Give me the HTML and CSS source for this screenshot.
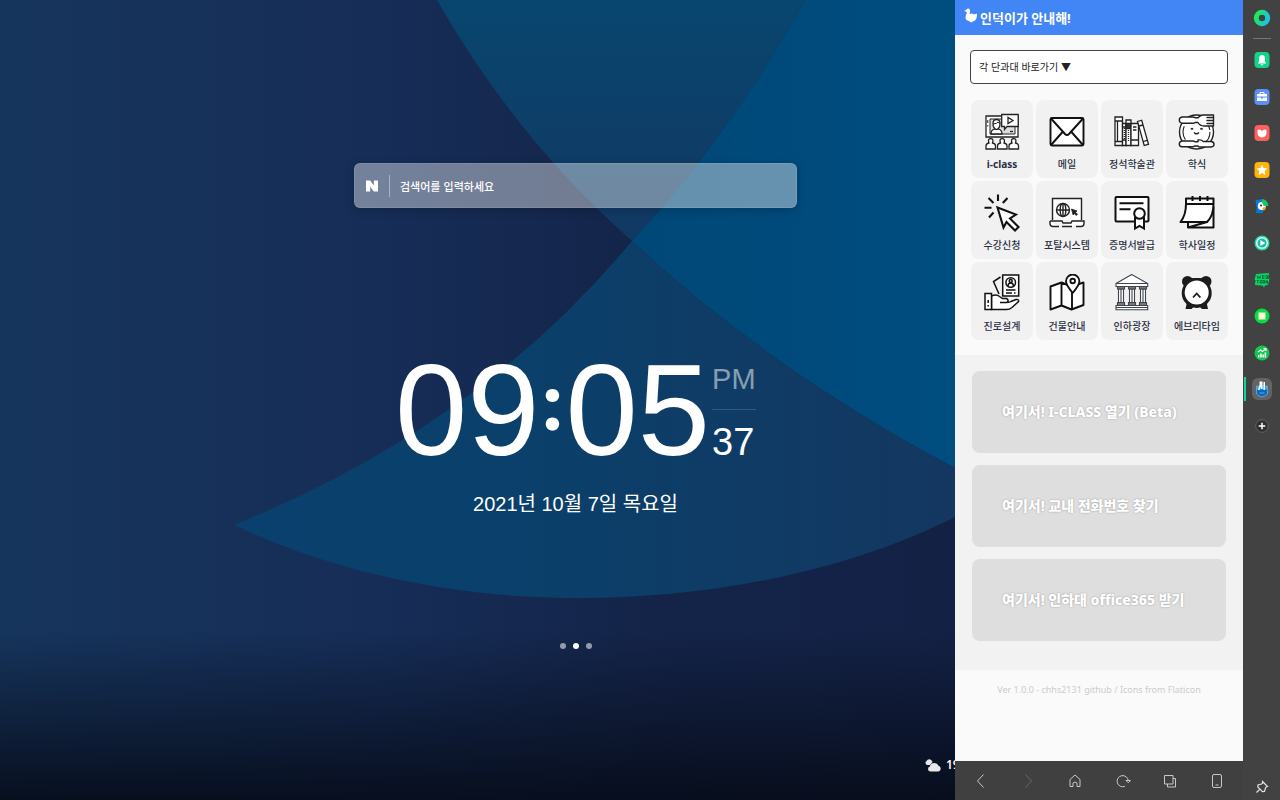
FILE: index.html
```html
<!DOCTYPE html>
<html lang="ko">
<head>
<meta charset="utf-8">
<title>인덕이가 안내해!</title>
<link rel="stylesheet" href="styles.css">
</head>
<body>
<main class="home">
  <svg class="wallpaper" viewBox="0 0 955 800" preserveAspectRatio="none" aria-hidden="true">
    <defs>
      <linearGradient id="base" x1="0" x2="1" y1="0" y2="0"><stop offset="0" stop-color="#16355d"/><stop offset=".4" stop-color="#162d57"/><stop offset=".68" stop-color="#142449"/><stop offset="1" stop-color="#132145"/></linearGradient>
      <linearGradient id="top" x1="0" x2="0" y1="0" y2="1"><stop offset="0" stop-color="#08466f"/><stop offset="1" stop-color="#123863"/></linearGradient>
      <linearGradient id="low" x1="0" x2="1" y1="0" y2="0"><stop offset="0" stop-color="#09406d"/><stop offset=".4" stop-color="#0a406b"/><stop offset="1" stop-color="#143760"/></linearGradient>
      <linearGradient id="right" x1="0" x2="1" y1="0" y2="0"><stop offset="0" stop-color="#004877"/><stop offset="1" stop-color="#004d80"/></linearGradient>
      <linearGradient id="fade" x1="0" x2="0" y1="0" y2="1"><stop offset="0" stop-color="#060b18" stop-opacity="0"/><stop offset="1" stop-color="#060b18" stop-opacity=".9"/></linearGradient>
    </defs>
    <path fill="url(#base)" d="M0 0H955V800H0z"/>
    <path fill="url(#top)" d="M437 0Q517 140 632 241Q730 135 805 0z"/>
    <path fill="url(#right)" d="M805 0Q730 135 632 241Q770 370 955 468V0z"/>
    <path fill="url(#low)" d="M632 241Q480 425 234 525C340 575 460 598 580 598S840 575 955 517V468Q770 370 632 241z"/>
    <path fill="url(#fade)" d="M0 630H955V800H0z"/>
  </svg>
  <div class="stage">
    <form class="search">
      <svg class="naver" viewBox="0 0 12 12" aria-hidden="true"><path fill="#fff" d="M0 0.500h4.200l3.600 5V.5H12v11H7.800l-3.600-5v5H0z"/></svg>
      <input class="query" type="text" placeholder="검색어를 입력하세요" aria-label="검색어">
    </form>
    <div class="clock">
      <div class="digits"><span>09</span><span class="colon">:</span><span>05</span></div>
      <div class="side"><span class="ampm">PM</span><span class="seconds">37</span></div>
    </div>
    <p class="date">2021년 10월 7일 목요일</p>
    <div class="dots"><i class="dot"></i><i class="dot on"></i><i class="dot"></i></div>
  </div>
  <div class="weather">
    <svg class="cloud" viewBox="0 0 17 14" aria-hidden="true"><g fill="#e8e8e8"><path d="M2.300 7A2.200 2.200 0 0 1 1.500 3 3 3 0 0 1 7 3l.5 1L5 7z"/><path d="M5.500 13.500a2.600 2.600 0 0 1-.6-5.100Q5.500 5 9.500 5q3 0 4 2.700a3 3 0 0 1 0 5.800z"/></g></svg>
    <span>19</span>
  </div>
</main>

<section class="panel">
  <header class="title">
    <svg class="duck" viewBox="0 0 14 15" aria-hidden="true"><path fill="#fff" d="M0 3 2 2Q3 0 4.500.500 6.500 1 6 3.500L5.500 6Q8 5 10 6.500L13 5.500Q13.500 12 9 13.500L7 14.500 5 13Q1.500 12.500 1.500 9.500 1.500 7 3 5L2 3.500z"/></svg>
    <h1>인덕이가 안내해!</h1>
  </header>
  <div class="shortcuts">
    <select class="college" aria-label="단과대"><option>각 단과대 바로가기 ▼</option></select>
    <nav class="tiles">
      <a class="tile" href="#"><svg viewBox="0 0 40 40"><g fill="#fff" stroke="#222" stroke-width="1.300"><path d="M4 4h32v21H4z"/><path d="M8 7h25v15H8z" fill="#ddd" stroke-width="1"/><path d="M5.800 8v3M5.800 13v1.500" stroke-width="1"/><path d="M9 22q0-4 3.500-5h4q3.500 1 3.500 5z"/><path d="M11 11.500q0-4 3.500-4t3.500 4q0 5-3.500 6-3.500-1-3.500-6z"/><path d="M11 12q4.500-.5 5-2 1 1.500 2 1.500" stroke-width="1"/><path d="M19.700 2.500h16.500v12H25l-2.500 3v-3h-2.800z"/><path d="M26 5.500v6l5-3z"/><path d="M28 19.500h3"/><path d="M4 37v-3q0-2.500 3-3-1.500-4.300 1.700-4.300T10.500 31q3 .5 3 3v3zM15.500 37v-3q0-2.500 3-3-1.500-4.300 1.700-4.300T22 31q3 .5 3 3v3zM27 37v-3q0-2.500 3-3-1.500-4.300 1.700-4.300T33.500 31q3 .5 3 3v3z"/></g></svg><b>i-class</b></a>
      <a class="tile" href="#"><svg viewBox="0 0 40 40"><g fill="#fff" stroke="#111" stroke-width="1.900" stroke-linejoin="round"><rect x="3.500" y="6" width="33" height="27.500" rx="1.500"/><path fill="none" d="M4 6.500 18 22q2 2 4 0L36 6.500M4 33l12-13.500M36 33 24 19.500"/></g></svg><span>메일</span></a>
      <a class="tile" href="#"><svg viewBox="0 0 40 40"><g fill="#fff" stroke="#222" stroke-width="1.300"><path d="M3 5h7.500v28.500H3z"/><path d="M3 9h7.500M3 29.500h7.500M5.500 9v20"/><path d="M10.500 11.500H14v22h-3.500z"/><path d="M14 8h5v25.500h-5z"/><path fill="#333" d="M14 11.500h5v5h-5zM10.500 15H14M10.500 28H14"/><path d="M19 11.500h7.500v22H19zM19 28h7.500M21 15h3.500M21 18h3.500"/><path d="m25.500 9.500 4.200-1.300 6.800 24-4.300 1.300zM27 14l4-1M31.300 29.500l4-1.200"/><path d="M12.300 16v11M16.500 18v12" stroke-dasharray="1 1"/></g></svg><span>정석학술관</span></a>
      <a class="tile" href="#"><svg viewBox="0 0 40 40"><g fill="#fff" stroke="#222" stroke-width="1.400" stroke-linejoin="round"><circle cx="19.500" cy="20" r="17"/><circle cx="19.500" cy="20" r="13.500" stroke-width="1.100" stroke-dasharray="14 3"/><path fill="none" d="M14 17.500q1-2 2 0M23.500 17.500q1-2 2 0M17 20.500q2.500 2.500 5 0"/><path d="M5 5h11q1 0 2 .8h3Q23 3 26 3h10.500v2.500H30 36.500V8.500H30h6.500v3H30h6.500V14H27q-4 0-6-3.500h-3q-1 .8-2 .8H5Q2.300 10.500 2.300 8T5 5z"/><path d="M5 29h11q1 0 2 .8h3V28q4-.5 5 1.500h8q3 .3 3 2.800T34 35H22l-1-1h-3l-2 .8H5q-2.700-.3-2.700-2.800T5 29z"/></g></svg><span>학식</span></a>

      <a class="tile" href="#"><svg viewBox="0 0 40 40"><g fill="#fff" stroke="#111" stroke-width="2.100"><path d="M16 1.500V8M6.500 5l5 5M2.500 14.700h7M25.500 5l-4.700 5M7 24.500l4.500-5"/><path stroke-linejoin="miter" d="m15.500 14.500 18.500 7-6 4 8.500 8.500-3.500 3.500-8.500-8.500-3 5.500z"/></g></svg><span>수강신청</span></a>
      <a class="tile" href="#"><svg viewBox="0 0 40 40"><g fill="#fff" stroke="#222" stroke-width="1.400"><path d="M5.500 27V5.500h29V27"/><circle cx="16" cy="17" r="6.500"/><ellipse cx="16" cy="17" rx="2.800" ry="6.500" fill="none"/><path fill="none" d="M9.500 17h13M16 10.500v13"/><path fill="#222" d="m24.500 16 5.500 2-1.500 1.300 2 2-1.200 1.200-2-2-1.200 1.500z" stroke-width=".8"/><path d="M3 28h12l1 2h8l1-2h12v2.500q0 3-3 3h-5M25 33.500H15M12 33.500H6q-3 0-3-3V28"/></g></svg><span>포탈시스템</span></a>
      <a class="tile" href="#"><svg viewBox="0 0 40 40"><g fill="#fff" stroke="#111" stroke-width="2"><rect x="3.500" y="4" width="33" height="24.500" rx="1"/><path d="M7.500 10.300h24M7.500 16.300h11"/><path d="M23 24v11.500l4.500-2.500 4.500 2.500V24"/><circle cx="27.500" cy="20.500" r="5.300"/></g></svg><span>증명서발급</span></a>
      <a class="tile" href="#"><svg viewBox="0 0 40 40"><g fill="#fff" stroke="#111" stroke-width="2" stroke-linejoin="round"><path d="M11 34.500h25.500V14L30 29z"/><path d="M9 5.500h27.500V11q0 12-6.500 18H3.500Q9 22 9 11z"/><path d="M9 11h27.500M15.500 3v5M23 3v5M30.500 3v5M11 29v5.500"/></g></svg><span>학사일정</span></a>

      <a class="tile" href="#"><svg viewBox="0 0 40 40"><g fill="#fff" stroke="#111" stroke-width="1.500"><path fill="none" d="m18.500 3-7 4.500L17 20"/><path d="M20.700 1h16v21h-16z"/><circle cx="28.700" cy="8.500" r="4.800"/><circle cx="28.700" cy="7" r="1.500"/><path d="M26 12q0-3 2.700-3t2.700 3M24 16h9.500M24 19h6M32 19h1.500"/><path d="M9.500 22q5-2 8 .5l3 2h4q2.500 1.500 1 3.500 2 .5 3.500-.5l5-2q3-.5 2.500 2l-6.500 6q-2.500 2-5.500 2h-15z"/><path fill="none" d="M18 28.500h7.500"/><path d="M3 19.500h6.500v16H3z"/><path d="M6.200 26v3M6.200 31v1.500"/></g></svg><span>진로설계</span></a>
      <a class="tile" href="#"><svg viewBox="0 0 40 40"><g fill="#fff" stroke="#111" stroke-width="1.900" stroke-linejoin="round"><path d="m3.500 12.500 11-4 10 4 12-4V31l-12 4.500-10-4-11 4zM14.500 8.500v23M25 12v23.500"/><path d="M25.700 19Q19 11 19 7.300a6.700 6.700 0 0 1 13.400 0Q32.400 11 25.700 19z"/><circle cx="25.700" cy="7" r="2.300"/></g></svg><span>건물안내</span></a>
      <a class="tile" href="#"><svg viewBox="0 0 40 40"><g fill="#fff" stroke="#40454d" stroke-width="1.100"><path d="m4 9.500 15.700-9 16 9v3H4zM4 9.500h31.700"/><path d="M6.500 15h5v14h-5zM17.500 15h5v14h-5zM28.500 15h5v14h-5zM9 15v14M20 15v14M31 15v14"/><path fill="#777" d="M5.500 12.500h7V15h-7zM16.500 12.500h7V15h-7zM27.500 12.500h7V15h-7zM5.500 28.500h7v3h-7zM16.500 28.500h7v3h-7zM27.500 28.500h7v3h-7z"/><path d="M4 31.500h31.700v4.200H4zM4 33.500h31.700"/></g></svg><span>인하광장</span></a>
      <a class="tile" href="#"><svg viewBox="0 0 40 40"><g fill="#1c1c1c"><circle cx="10.500" cy="7.500" r="5.500"/><circle cx="29" cy="7.500" r="5.500"/><path d="M8 5q12-2 23.500 0v8H8z"/><circle cx="19.700" cy="19" r="15"/><path d="m10 28-1.500 7h6l3-3h4.500l3 3h6L29.500 28z"/></g><circle cx="19.700" cy="18.500" r="12" fill="#fff"/><path d="m16 23.500 3.700-4 3.700 4" fill="none" stroke="#1c1c1c" stroke-width="1.800"/></svg><span>에브리타임</span></a>
    </nav>
  </div>
  <div class="cards">
    <button class="card" type="button">여기서! I-CLASS 열기 (Beta)</button>
    <button class="card" type="button">여기서! 교내 전화번호 찾기</button>
    <button class="card" type="button">여기서! 인하대 office365 받기</button>
  </div>
  <footer class="version">Ver 1.0.0 - chhs2131 github / Icons from Flaticon</footer>
  <div class="toolbar">
    <button type="button" aria-label="뒤로"><svg viewBox="0 0 16 16"><path d="M10.500 1.500 4.500 8l6 6.500"/></svg></button>
    <button type="button" aria-label="앞으로" disabled><svg viewBox="0 0 16 16"><path d="m5.500 1.500 6 6.500-6 6.500"/></svg></button>
    <button type="button" aria-label="홈"><svg viewBox="0 0 16 16"><path d="M3 6.500 8 2l5 4.500v7h-3V10q-2-2-4 0v3.500H3z"/></svg></button>
    <button type="button" aria-label="새로고침"><svg viewBox="0 0 16 16"><path d="M10 13.300A5.600 5.600 0 1 1 13.300 8M11 7.500h4.500l-2.200 2.300z"/></svg></button>
    <button type="button" aria-label="새 창"><svg viewBox="0 0 16 16"><path d="M2.500 2.500h8.500v8.500H2.500zM11 5.500h2.500v8.500H5.500v-3"/></svg></button>
    <button type="button" aria-label="모바일"><svg viewBox="0 0 16 16"><rect x="3.500" y="1.500" width="9" height="13" rx="1.500"/><path d="M6.500 12h3"/></svg></button>
  </div>
</section>

<aside class="rail">
  <button class="app" type="button" aria-label="웨일"><svg viewBox="0 0 20 20"><defs><linearGradient id="ring" x1="0" y1=".3" x2="1" y2=".7"><stop offset="0" stop-color="#1ee85a"/><stop offset="1" stop-color="#1bc5dd"/></linearGradient></defs><circle cx="10" cy="10" r="5.700" fill="none" stroke="url(#ring)" stroke-width="5"/></svg></button>
  <hr class="rule">
  <div class="apps">
    <button class="app" type="button" aria-label="알림"><svg viewBox="0 0 20 20"><rect x="2.500" y="2" width="15" height="16" rx="4" fill="#12d488"/><path fill="#fff" d="M6 13.500V13l1-1V8.500Q7 5 10 5t3 3.500V12l1 1v.5zM8.800 14.300h2.400v1H8.800z"/></svg></button>
    <button class="app" type="button" aria-label="도구"><svg viewBox="0 0 20 20"><rect x="2.500" y="2" width="15" height="16" rx="4" fill="#5990f7"/><path fill="#fff" d="M5 7h10v2.500H5zM5 10.500h4v1h2v-1h4V14H5z"/><path fill="none" stroke="#fff" d="M8 7V5.500h4V7"/></svg></button>
    <button class="app" type="button" aria-label="포켓"><svg viewBox="0 0 20 20"><rect x="2.500" y="2" width="15" height="16" rx="4" fill="#fa615f"/><path fill="#fff" d="M5.500 7q2.500-1.500 4.500 1 2-2.500 4.500-1v2.500q0 4.500-4.500 5-4.500-.5-4.500-5z"/></svg></button>
    <button class="app" type="button" aria-label="즐겨찾기"><svg viewBox="0 0 20 20"><rect x="2.500" y="2" width="15" height="16" rx="4" fill="#fdb40b"/><path fill="#fff" d="m10 4.500 1.600 3.600 3.900.4-2.900 2.600.8 3.900-3.400-2-3.400 2 .8-3.900-2.900-2.600 3.900-.4z"/></svg></button>
    <button class="app" type="button" aria-label="파파고"><svg viewBox="0 0 20 20"><path fill="#0878dc" d="m3.500 3.500 2.500.5q2-1 5-1v14H4q1-2 .5-6z"/><circle cx="9.800" cy="10" r="4" fill="#fff"/><circle cx="9" cy="9.500" r="1" fill="#222"/><path fill="#17c866" d="M10 3q6 1 6.500 7h-5q0-2-1.500-3z"/><path fill="#e7a317" d="M10.500 12q2-1.500 3.500-1-.5 4-3 3.500z"/></svg></button>
    <button class="app" type="button" aria-label="재생"><svg viewBox="0 0 20 20"><circle cx="10" cy="10" r="7.500" fill="#20dda0"/><circle cx="10" cy="10" r="5.300" fill="#18b9b0" stroke="#dffdf2" stroke-width="1.500"/><path fill="#fff" d="m8.300 7 5 3-5 3z"/></svg></button>
    <button class="app" type="button" aria-label="웹툰"><svg viewBox="0 0 20 20"><path fill="#08d564" d="m4 4 13-1-1 6 1.500-.5L16 15l-3 .5-1 2-1.500-2L3 15l.5-5H2.500z"/><path fill="none" stroke="#174c31" stroke-width=".7" d="m5 5.500 1 3 1-2 1 2 1-3M12.500 5.500h-2v3h2M10.500 7h2M14 5.500v3h1.500v-3zM4.500 10.500H7M5.700 10.500v3M8 10.500h2v2.500H8zM11 10.500h1.500V13H11zM14 13.500v-3l1.500 3v-3"/></svg></button>
    <button class="app" type="button" aria-label="정지"><svg viewBox="0 0 20 20"><circle cx="10" cy="10" r="7.500" fill="#08dc43"/><path fill="#fff8d7" d="M6.500 6.500h7v7h-7z"/></svg></button>
    <button class="app" type="button" aria-label="증권"><svg viewBox="0 0 20 20"><circle cx="10" cy="10" r="7.500" fill="#12c84c"/><path fill="none" stroke="#fff" stroke-width="1.100" d="m6 9 2.500-2 2 1.500L14 5.500M11.500 5.500H14V8"/><path fill="#fff" d="M6 12h1.500v2.500H6zM8.200 10.500h1.500v4H8.200zM10.400 11.500h1.500v3h-1.500zM12.600 9.500h1.500v5h-1.500z"/></svg></button>
    <button class="app active" type="button" aria-label="인덕이"><svg viewBox="0 0 20 20"><rect y="-1" width="20" height="22" rx="6" fill="#636363"/><path fill="#0869bd" stroke="#7ab9e8" stroke-width=".7" d="M4.500 7h11v8q-2 2-5.500 3-3.500-1-5.500-3z"/><path fill="#27b5ed" d="M5 7h10v3.500H5z"/><path fill="#fff" d="M7.500 2.500h3V10H9V7.500L7.500 11H6l1.500-5zM11.500 3H13v8h-1.500z"/><path stroke="#75baf0" stroke-width=".8" d="M7.500 14h5"/></svg></button>
    <button class="app" type="button" aria-label="추가"><svg viewBox="0 0 20 20"><circle cx="10" cy="10" r="6.300" fill="#303030" stroke="#626262"/><path stroke="#fff" stroke-width="1.500" d="M6.700 10h6.600M10 6.700v6.600"/></svg></button>
  </div>
  <button class="app pin" type="button" aria-label="고정"><svg viewBox="0 0 20 20"><path fill="none" stroke="#e2e2e2" stroke-width="1.200" d="m10.500 4.500 5 5-1.300.5-.7 1-1 3.500-2 .2-4.700-4.700.2-2L9.500 7l1-.8zM8 12l-3.500 3.500"/></svg></button>
</aside>
</body>
</html>
```
FILE: styles.css
```css
* { box-sizing: border-box; }

body {
  margin: 0;
  min-height: 100vh;
  display: flex;
  overflow: hidden;
  font-family: "Noto Sans", "Noto Sans CJK KR", sans-serif;
}

button {
  border: 0;
  padding: 0;
  background: none;
  font: inherit;
}

svg { display: block; }

/* New tab page */
.home {
  position: relative;
  flex: 1;
  min-width: 0;
  display: flex;
  flex-direction: column;
  overflow: hidden;
  color: #fff;
}

.wallpaper {
  position: absolute;
  inset: 0;
  width: 100%;
  height: 100%;
}

.stage {
  position: relative;
  flex: 1;
  display: flex;
  flex-direction: column;
  align-items: center;
  padding: 163px 0 0 196px;
}

.search {
  display: flex;
  align-items: center;
  width: 443px;
  height: 45px;
  padding-left: 11px;
  border-radius: 6px;
  border: 1px solid rgba(255, 255, 255, .1);
  background: rgba(255, 255, 255, .4);
  box-shadow: 0 2px 10px rgba(0, 0, 0, .2);
}

.naver { width: 12px; height: 12px; }

.query {
  flex: 1;
  height: 22px;
  margin-left: 11px;
  padding: 0 10px;
  border: 0;
  border-left: 1px solid rgba(255, 255, 255, .4);
  background: none;
  color: #fff;
  font: 500 11px "Noto Sans CJK KR", sans-serif;
}

.query::placeholder { color: #fff; opacity: 1; }

.clock {
  display: flex;
  align-items: center;
  margin-top: 137px;
  font-family: "Liberation Sans", Arial, sans-serif;
}

.digits {
  display: flex;
  align-items: center;
  font-size: 130px;
  line-height: 130px;
}

.colon {
  width: 26px;
  padding-bottom: 24px;
  text-align: center;
  font: 900 82px/100px Lato, sans-serif;
}

.side {
  display: flex;
  flex-direction: column;
  width: 44px;
  margin-left: 2px;
  padding-top: 6px;
}

.ampm {
  height: 47px;
  border-bottom: 1px solid rgba(255, 255, 255, .15);
  color: rgba(255, 255, 255, .5);
  font-size: 29px;
  line-height: 32px;
}

.seconds {
  margin-top: 10px;
  font-size: 38px;
  line-height: 44px;
}

.date {
  margin: 13px 0 0;
  font: 20px/32px "Liberation Sans", "Noto Sans CJK KR", sans-serif;
}

.dots {
  display: flex;
  gap: 7px;
  margin-top: 123px;
}

.dot {
  width: 6px;
  height: 6px;
  border-radius: 50%;
  background: rgba(255, 255, 255, .55);
}

.dot.on { background: #fff; }

.weather {
  position: relative;
  align-self: flex-end;
  display: flex;
  align-items: center;
  gap: 4px;
  width: 30px;
  margin-bottom: 25px;
  white-space: nowrap;
  font-size: 12px;
  font-weight: 600;
  line-height: 20px;
}

.cloud { flex: none; width: 17px; height: 14px; }

/* Side panel */
.panel {
  width: 288px;
  display: flex;
  flex-direction: column;
  background: #fafafa;
}

.title {
  display: flex;
  align-items: center;
  gap: 2px;
  height: 35px;
  padding-left: 9px;
  background: #4285f4;
  color: #fff;
}

.duck { width: 14px; height: 15px; margin-bottom: 4px; }

.title h1 {
  margin: 0;
  font-size: 13px;
  font-weight: 700;
}

.shortcuts { padding: 15px 15px; }

.college {
  appearance: none;
  display: block;
  width: 100%;
  height: 34px;
  padding: 0 8px 2px;
  border: 1px solid #444;
  border-radius: 4px;
  background: #fff;
  color: #222;
  font: 10px "Noto Sans CJK KR", sans-serif;
}

.tiles {
  display: grid;
  grid-template-columns: repeat(4, 1fr);
  gap: 3px;
  margin: 16px 0 0 1px;
}

.tile {
  display: flex;
  flex-direction: column;
  align-items: center;
  gap: 5px;
  padding: 12px 0 7px;
  border-radius: 8px;
  background: #f1f1f1;
  color: #2b2f42;
  font-size: 10px;
  font-weight: 500;
  line-height: 14px;
  text-decoration: none;
  white-space: nowrap;
}

.tile svg { width: 40px; height: 40px; }

.cards {
  display: flex;
  flex-direction: column;
  gap: 12px;
  padding: 16px 17px 29px;
  background: #f2f2f2;
}

.card {
  height: 82px;
  padding: 0 0 2px 30px;
  border-radius: 8px;
  background: #dedede;
  color: #fff;
  font-size: 14px;
  font-weight: 800;
  text-align: left;
  text-shadow: 0 0 2px rgba(0, 0, 0, .3);
}

.version {
  flex: 1;
  padding-top: 12px;
  color: #ccc;
  font-size: 9px;
  line-height: 16px;
  text-align: center;
}

.toolbar {
  display: flex;
  align-items: center;
  justify-content: space-between;
  height: 39px;
  padding: 0 18px;
  background: #404040;
}

.toolbar svg {
  width: 16px;
  height: 16px;
  fill: none;
  stroke: #c8c8c8;
}

.toolbar button:disabled svg { stroke: #686868; }

/* App rail */
.rail {
  display: flex;
  flex-direction: column;
  align-items: center;
  width: 37px;
  padding: 8px 0 3px;
  background: #424242;
}

.app { width: 20px; height: 20px; }

.app svg { width: 20px; height: 20px; overflow: visible; }

.rule {
  width: 18px;
  height: 1px;
  margin: 10px 0 11px;
  border: 0;
  background: #777;
}

.apps {
  display: flex;
  flex-direction: column;
  align-items: center;
  justify-content: space-between;
  width: 100%;
  height: 386px;
}

.active { position: relative; }

.active::before {
  content: "";
  position: absolute;
  left: -8px;
  top: -2px;
  width: 2px;
  height: 24px;
  background: #10d29b;
}

.pin { margin-top: auto; }
```
